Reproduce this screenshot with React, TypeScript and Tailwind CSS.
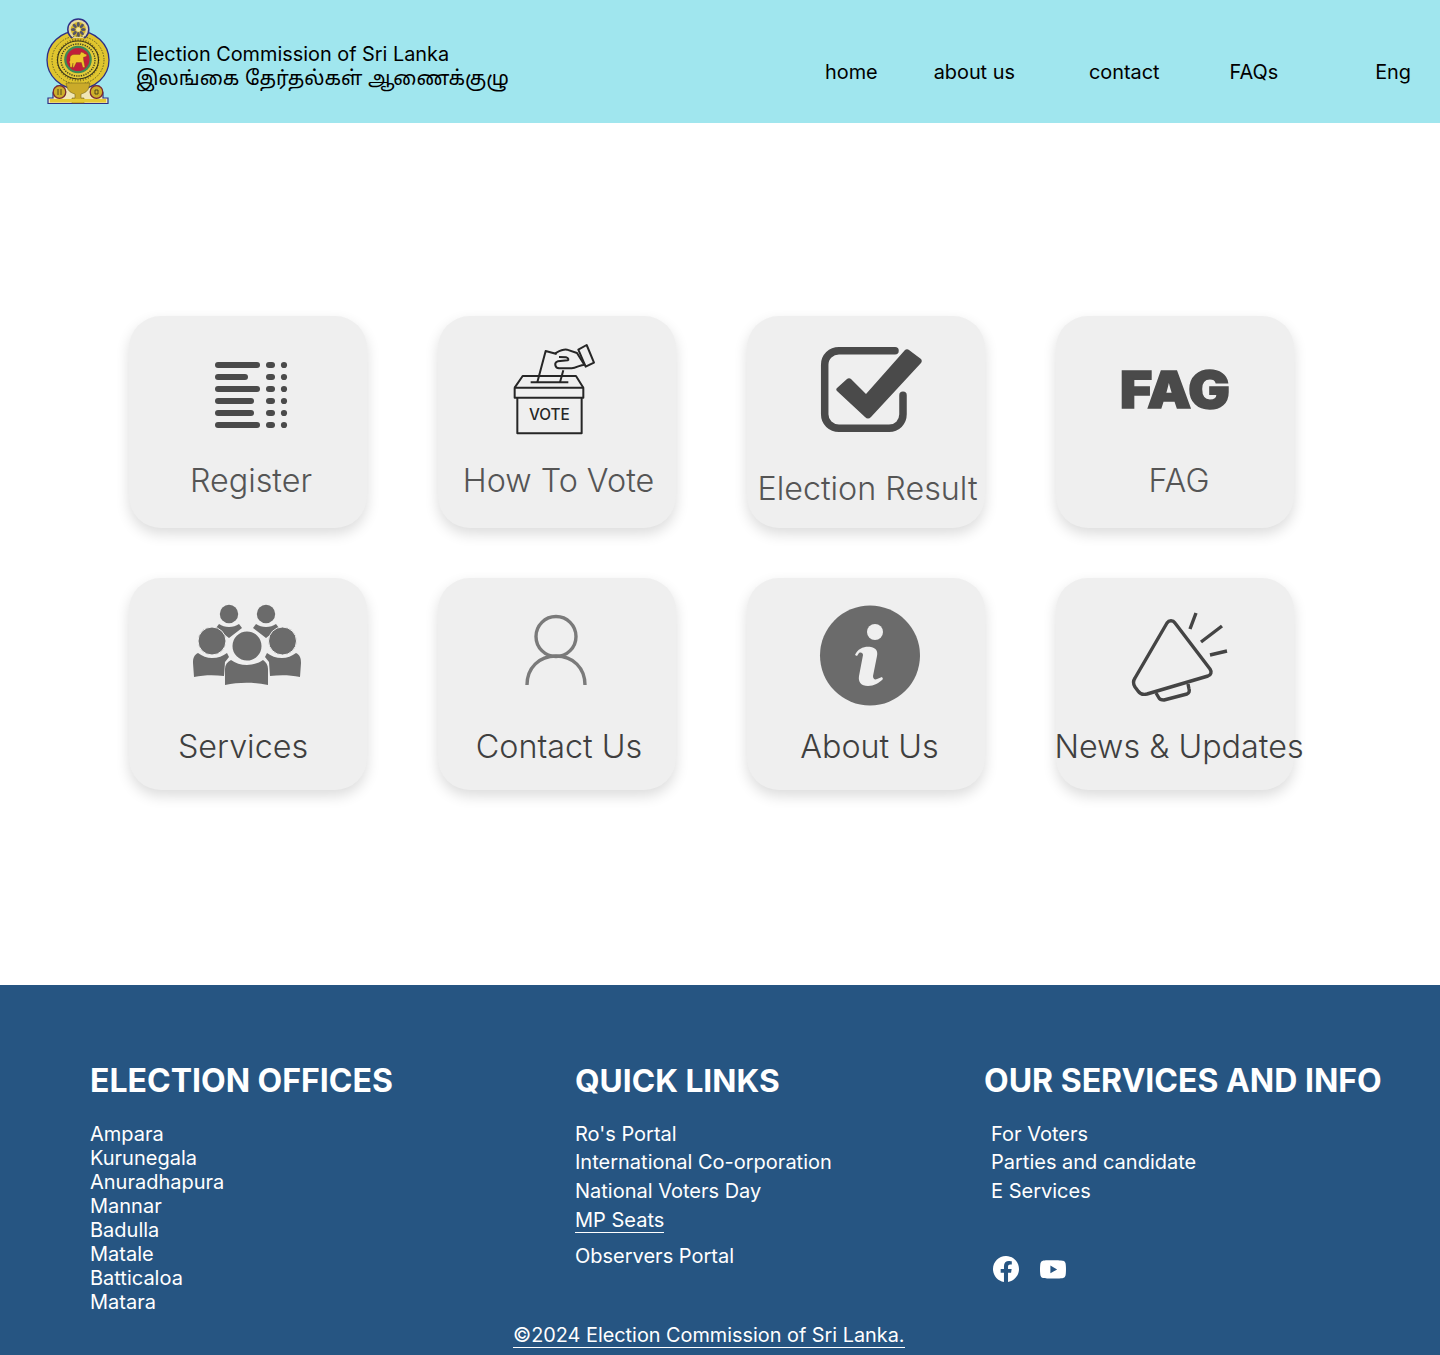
import React from "react";
import { BsFacebook, BsYoutube } from "react-icons/bs";

const font = { fontFamily: 'Inter, "Noto Sans Tamil", "Noto Sans", "DejaVu Sans", sans-serif' };

function Emblem() {
  const spokes = Array.from({ length: 8 }, (_, i) => i * 45);
  const ticks = Array.from({ length: 48 }, (_, i) => i * 7.5);
  const navy = "#2e2f86";
  return (
    <svg viewBox="0 0 100 100" className="w-[100px] h-[100px] block shrink-0">
      <path d="M18 93.5V88h5v-5l4-7h42l4 7v5h5v5.500z" fill="#f0e6b4" stroke={navy} strokeWidth="1.2" />
      <ellipse cx="48" cy="50" rx="31" ry="29" fill="#e0c52e" stroke={navy} strokeWidth="1.3" />
      <circle cx="48.3" cy="19.5" r="10.5" fill="#e6d9a0" stroke={navy} strokeWidth="1.5" />
      <circle cx="48.3" cy="19.5" r="7.6" fill="#d5b62a" />
      {spokes.map((a) => (
        <ellipse key={a} cx="48.3" cy="14.5" rx="1.5" ry="2.4" fill="#55556a" transform={`rotate(${a} 48.3 19.5)`} />
      ))}
      <circle cx="48.3" cy="19.5" r="2.2" fill="#f2e6a0" />
      <rect x="42" y="28" width="12.6" height="5" fill="#d5b62a" />
      <ellipse cx="48" cy="50" rx="26" ry="24" fill="none" stroke="#5d5a22" strokeWidth="1" strokeDasharray="1.4 1.4" />
      {ticks.map((a) => (
        <rect key={a} x="47.6" y="28.5" width="0.9" height="4.2" fill="#7a6a1e" transform={`rotate(${a} 48 50)`} />
      ))}
      <ellipse cx="48" cy="50" rx="20.5" ry="19" fill="#e3cb38" stroke="#35331c" strokeWidth="1.1" />
      <ellipse cx="48" cy="50" rx="17" ry="16" fill="none" stroke="#45421f" strokeWidth="1.4" strokeDasharray="1.3 1.1" />
      <ellipse cx="48" cy="49.5" rx="13.8" ry="13.8" fill="#3f8a55" />
      <ellipse cx="48" cy="49.5" rx="11.5" ry="11.5" fill="#c01f3a" />
      <path d="M40 57v-9c0-2 2-3.500 4-3.500h6l1-2.500 2 .5 1 1 3 1.200-.8 1.800-2.800.8.2 2.800 1.400 7.400h-2.200l-1.400-5h-5l-2.500 5H42.800l.2-4.500-1 4.500z" fill="#efc52c" stroke="#5e3a14" strokeWidth="0.3" />
      <circle cx="41" cy="52" r="1.5" fill="#efc52c" />
      <path d="M36 73h24l-1 4c-1 4-4 6-8 7v4h3v5H42v-5h3v-4c-4-1-7-3-8-7z" fill="#cbab2a" stroke="#7b6a1c" strokeWidth="0.6" />
      <circle cx="29.5" cy="82" r="6.3" fill="#cdaf2a" stroke="#7a2a30" strokeWidth="1.3" />
      <circle cx="66.5" cy="82" r="6.3" fill="#cdaf2a" stroke="#7a2a30" strokeWidth="1.3" />
      <path d="M28 79v6M31 79v6M65 80h3v4h-3z" stroke="#46401a" strokeWidth="0.9" fill="none" />
      <rect x="20" y="89" width="56" height="3.5" fill="#e3c832" />
    </svg>
  );
}

const boxes = {
  register: "129 316 238 140",
  vote: "438 316 238 140",
  result: "747 316 238 140",
  fag: "1056 316 238 140",
  services: "129 578 238 140",
  contact: "438 578 238 140",
  about: "747 578 238 140",
  news: "1056 578 238 140",
};

function Icon({ box, children }: { box: string; children: React.ReactNode }) {
  return (
    <svg viewBox={box} className="w-[238px] h-[140px] block shrink-0 overflow-visible">
      {children}
    </svg>
  );
}

function RegisterIcon() {
  const rows: [number, number][] = [[365, 260], [377, 248], [389, 260], [401, 254], [413, 254], [425, 260]];
  return (
    <Icon box={boxes.register}>
      {rows.map(([y, x2]) => (
        <g key={y} fill="#4a4a4a">
          <rect x="215" y={y - 3} width={x2 - 215} height="6" rx="3" />
          <rect x="266" y={y - 3} width="9" height="6" rx="3" />
          <circle cx="284" cy={y} r="3.1" />
        </g>
      ))}
    </Icon>
  );
}

function VoteIcon() {
  return (
    <Icon box={boxes.vote}>
      <g transform="translate(500 340) scale(0.3333)" fill="none" stroke="#262626" strokeWidth="6" strokeLinejoin="round">
        <path d="M52 173v107h193V173" />
        <path d="M44 173v-30h206v30z" />
        <path d="M44 143l24-35h160l22 35" />
        <path d="M92 127h113" />
        <path d="M112 127l25-94 33 9" />
        <path d="M180 127l10-36" />
        <path d="M165 40c10-5 22-13 36-11l30 10 22 35c-12 0-25 11-38 11h-38c-12-1-16-17-4-21l30-3c4-2 2-7-4-9l-22-1" />
        <path d="M235 29l25-14 22 53-25 12z" />
        <text x="148" y="240" textAnchor="middle" fontSize="46" fontWeight="500" fill="#262626" stroke="none" fontFamily="Inter, sans-serif">VOTE</text>
      </g>
    </Icon>
  );
}

function ResultIcon() {
  return (
    <Icon box={boxes.result}>
      <path d="M895 350.7h-56c-8 0-14.300 6-14.300 14v49.600c0 8 6.300 14 14.300 14h50c8 0 14-6 14-14v-19" fill="none" stroke="#4a4a4a" strokeWidth="7.5" strokeLinecap="round" />
      <path d="M837 388l10-9c1-1 3-1 4 0l15 15 39-44c1-1 3-1 4 0l12 9c1 1 1 3 0 4l-50 54c-2 2-4 2-6 0l-28-26c-1-1-1-2 0-3z" fill="#4a4a4a" />
    </Icon>
  );
}

function FagIcon() {
  return (
    <Icon box={boxes.fag}>
      <text x="1120" y="407.5" fontSize="51" fontWeight="900" fill="#4a4a4a" stroke="#4a4a4a" strokeWidth="1.6" textLength="110" lengthAdjust="spacingAndGlyphs" fontFamily="Inter, sans-serif">FAG</text>
    </Icon>
  );
}

function ServicesIcon() {
  const c = "#6b6b6b";
  const bg = "#efefef";
  return (
    <Icon box={boxes.services}>
      <g fill={c}>
        <circle cx="229" cy="614" r="9.2" />
        <circle cx="266" cy="614" r="9.2" />
        <path d="M219 624c3 2 6 3 10 3s7-1 10-3l3 4-13 10-13-10z" />
        <path d="M256 624c3 2 6 3 10 3s7-1 10-3l3 4-13 10-13-10z" />
        <circle cx="212" cy="641" r="14" stroke={bg} strokeWidth="1" />
        <circle cx="282.5" cy="641" r="14" stroke={bg} strokeWidth="1" />
        <path d="M198 653c4 3 9 5 14 5 6 0 11-2 15-5l2 4-4 5-1 14c-10-1-20-1-30 1l-1-14c0-5 1-8 5-10z" />
        <path d="M296 653c-4 3-9 5-14 5-6 0-11-2-15-5l-2 4 4 5 1 14c10-1 20-1 30 1l1-14c0-5-1-8-5-10z" />
        <circle cx="247" cy="646" r="15.5" stroke={bg} strokeWidth="2" />
        <path d="M231 660c4 3 10 5 16 5s12-2 16-5c3 2 5 5 5 9v16c-14-3-29-3-43 0v-16c0-4 2-7 6-9z" />
      </g>
    </Icon>
  );
}

function ContactIcon() {
  return (
    <Icon box={boxes.contact}>
      <g fill="none" stroke="#7a7a7a" strokeWidth="3.4">
        <ellipse cx="556" cy="636.5" rx="20" ry="20" />
        <path d="M527 685c0-17 12-29 29-29s29 12 29 29" />
      </g>
    </Icon>
  );
}

function AboutIcon() {
  return (
    <Icon box={boxes.about}>
      <circle cx="870" cy="655.5" r="50" fill="#6b6b6b" />
      <circle cx="875" cy="632" r="8" fill="#efefef" />
      <path d="M855 655c3-7 10-9 16-8 5 1 7 4 6 9l-4 20c0 3 2 4 4 3l5-2 1 2c-4 4-9 7-15 7-7 0-10-4-9-10l4-21c0-2-2-3-4-2l-2 3z" fill="#efefef" />
    </Icon>
  );
}

function NewsIcon() {
  return (
    <Icon box={boxes.news}>
      <g fill="none" stroke="#444" strokeWidth="3.4" strokeLinejoin="round">
        <path d="M1167 623c2-3 6-3 8 0l35 46c2 3 1 6-2 7l-61 18c-4 1-7 0-9-3l-3-4c-2-3-2-6 0-9z" />
        <path d="M1156 693l3 5c1 2 3 2 5 2l23-6c2-1 3-3 2-5l-1-5" />
        <path d="M1196 613l-6 16M1222 626l-21 16M1227 651l-17 4" strokeLinecap="butt" />
      </g>
    </Icon>
  );
}

type C = { icon: React.ReactNode; label: string; cls: string };

const cards: C[] = [
  { icon: <RegisterIcon />, label: "Register", cls: "ml-[6px] text-[#555555]" },
  { icon: <VoteIcon />, label: "How To Vote", cls: "ml-[3px] text-[#555555]" },
  { icon: <ResultIcon />, label: "Election Result", cls: "ml-[3px] mt-[8px] text-[#555555]" },
  { icon: <FagIcon />, label: "FAG", cls: "ml-[8px] text-[#555555]" },
  { icon: <ServicesIcon />, label: "Services", cls: "mr-[10px] mt-[4px] text-[#3f3f3f]" },
  { icon: <ContactIcon />, label: "Contact Us", cls: "ml-[4px] mt-[4px] text-[#3f3f3f]" },
  { icon: <AboutIcon />, label: "About Us", cls: "ml-[7px] mt-[4px] text-[#3f3f3f]" },
  { icon: <NewsIcon />, label: "News & Updates", cls: "ml-[8px] mt-[4px] text-[#3f3f3f]" },
];

const offices = ["Ampara", "Kurunegala", "Anuradhapura", "Mannar", "Badulla", "Matale", "Batticaloa", "Matara"];

export default function App() {
  return (
    <div className="w-[1440px] bg-white" style={font}>
      <header className="h-[123px] bg-[#a0e6ee] flex items-start text-black text-[20px]">
        <div className="pl-[30px] pt-[10px]">
          <Emblem />
        </div>
        <div className="pl-[6px] pt-[42px] leading-[24px]">
          <div className="text-[19.88px]">Election Commission of Sri Lanka</div>
          <div>இலங்கை தேர்தல்கள் ஆணைக்குழு</div>
        </div>
        <nav className="flex ml-auto pt-[60px] pr-[29px] leading-[24px] text-[19.88px]">
          <span className="mr-[56px]">home</span>
          <span className="mr-[74px]">about us</span>
          <span className="mr-[70px]">contact</span>
          <span className="mr-[97px]">FAQs</span>
          <span>Eng</span>
        </nav>
      </header>

      <main className="h-[862px] pt-[193px] pl-[129px]">
        <div className="grid grid-cols-[repeat(4,238px)] gap-x-[71px] gap-y-[50px]">
          {cards.map((c) => (
            <div key={c.label} className="w-[238px] h-[212px] rounded-[32px] bg-[#efefef] shadow-[0_6px_14px_rgba(0,0,0,0.14)] flex flex-col items-center">
              {c.icon}
              <div className={`text-[32.3px] leading-[50px] font-light whitespace-nowrap ${c.cls}`}>{c.label}</div>
            </div>
          ))}
        </div>
      </main>

      <footer className="h-[370px] bg-[#265582] text-white text-[20px] leading-[24px] pt-[76px]">
        <div className="flex h-[262px]">
          <div className="w-[575px] pl-[90px]">
            <h2 className="text-[32px] leading-[40px] font-bold mb-[21px]">ELECTION OFFICES</h2>
            {offices.map((o) => (
              <div key={o}>{o}</div>
            ))}
          </div>
          <div className="w-[409px]">
            <h2 className="text-[31.7px] leading-[40px] font-bold mb-[21px]">QUICK LINKS</h2>
            <div>Ro's Portal</div>
            <div className="mt-[4px]">International Co-orporation</div>
            <div className="mt-[5px]">National Voters Day</div>
            <div className="mt-[5px]">
              <span className="inline-block border-b border-white">MP Seats</span>
            </div>
            <div className="mt-[11px]">Observers Portal</div>
          </div>
          <div>
            <h2 className="text-[32px] leading-[40px] font-bold mb-[21px] whitespace-nowrap">OUR SERVICES AND INFO</h2>
            <div className="pl-[7px]">
              <div>For Voters</div>
              <div className="mt-[4px]">Parties and candidate</div>
              <div className="mt-[5px]">E Services</div>
              <div className="flex items-center mt-[52px] gap-[21px] pl-[2px]">
                <BsFacebook size={26} />
                <BsYoutube size={26} className="mt-[2px]" />
              </div>
            </div>
          </div>
        </div>
        <div className="ml-[513px] text-[19.85px]">
          <span className="inline-block border-b border-white">©2024 Election Commission of Sri Lanka.</span>
        </div>
      </footer>
    </div>
  );
}
